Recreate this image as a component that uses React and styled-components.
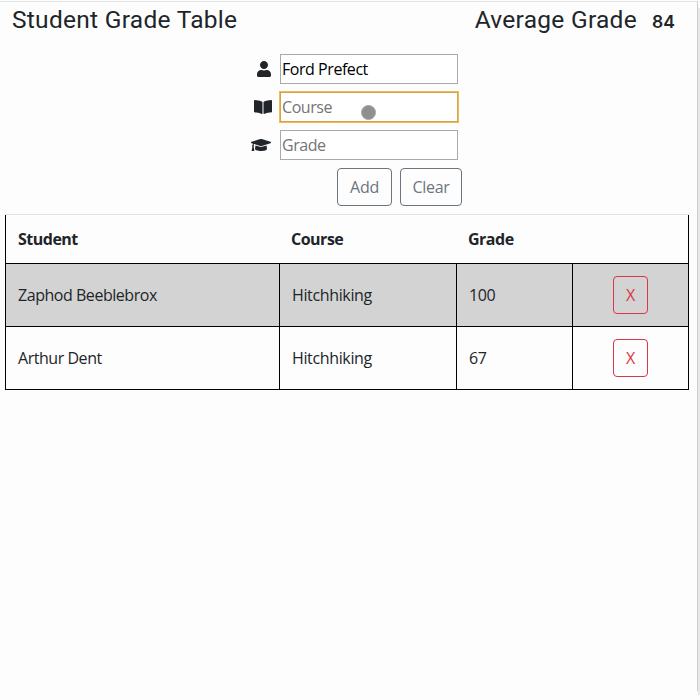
import React, { useState } from 'react';
import styled, { createGlobalStyle } from 'styled-components';
import { FaUser, FaBookOpen, FaGraduationCap } from 'react-icons/fa';

const GlobalStyle = createGlobalStyle`
  *, *::before, *::after { box-sizing: border-box; }
  body {
    margin: 0;
    overflow: hidden;
    background: #fdfdfd;
    color: #212529;
    font: 400 16px/24px "Open Sans", "Noto Sans", sans-serif;
  }
`;

const Window = styled.div`
  display: flex;
  align-items: flex-start;
  width: 700px;
  height: 700px;
`;

const Page = styled.main`
  width: 697px;
  height: 700px;
  padding: 1px 8px 0 5px;
  background: linear-gradient(#e4e6e6, #e4e6e6) 0 1px / 100% 1px no-repeat #fdfdfd;
`;

const Edge = styled.div`
  width: 1px;
  height: 690px;
  margin-top: 1px;
  background: #cecece;
`;

const Gutter = styled.div`
  width: 2px;
  height: 687px;
  margin-top: 8px;
  background: #e8e8e8;
`;

const Header = styled.header`
  display: flex;
  justify-content: space-between;
  height: 53px;
  padding: 5px 13px 0 7px;
  font-family: Roboto, sans-serif;
`;

const Title = styled.h1`
  margin: 0;
  font-size: 24.5px;
  font-weight: 400;
  line-height: 28px;
  letter-spacing: 0.28px;
  white-space: nowrap;
`;

const Average = styled.div`
  display: flex;
  gap: 15px;
`;

const Badge = styled.span`
  width: 24px;
  padding-top: 2px;
  font-family: Inter, sans-serif;
  font-size: 17.5px;
  font-weight: 600;
  line-height: 28px;
`;

const Form = styled.form`
  display: flex;
  flex-direction: column;
  gap: 8px;
  width: 215px;
  margin-left: 243px;
`;

const Field = styled.label`
  display: flex;
  align-items: center;
  gap: 8px;
  height: 30px;
`;

const IconSlot = styled.span`
  display: flex;
  justify-content: flex-end;
  flex: none;
  width: 24px;
  margin-right: ${(p) => p.$gap || 0}px;
  margin-left: ${(p) => -(p.$gap || 0)}px;
`;

const Input = styled.input`
  flex: none;
  width: 178px;
  height: 30px;
  padding: 1px;
  border: 1px solid ${(p) => (p.$active ? '#d4a24a' : '#a9a9a9')};
  border-radius: 0;
  outline: none;
  box-shadow: ${(p) => (p.$active ? '0 0 0 1px #efb95c' : 'none')};
  background: #fff;
  color: #000;
  font: inherit;
  letter-spacing: -0.45px;
  &::placeholder { color: #757575; opacity: 1; }
`;

const InputWrap = styled.span`
  position: relative;
  display: flex;
`;

const Pointer = styled.span`
  position: absolute;
  left: 81px;
  top: 13px;
  width: 15px;
  height: 15px;
  border: 1px solid #a6a6a6;
  border-radius: 50%;
  background: #8f8f8f;
`;

const Actions = styled.div`
  display: flex;
  gap: 8px;
  margin: 8px 0 8px 332px;
`;

const Button = styled.button`
  width: 55px;
  height: 38px;
  padding: 0;
  border: 1px solid #6c757d;
  border-radius: 4px;
  background: transparent;
  color: #6c757d;
  font: inherit;
  letter-spacing: -0.3px;
`;

const ClearButton = styled(Button)`
  width: 62px;
`;

const DeleteButton = styled(Button)`
  width: 35px;
  border-color: #dc3545;
  color: #dc3545;
`;

const Table = styled.div`
  width: 684px;
  border-top: 1px solid #dee2e6;
`;

const Row = styled.div`
  display: grid;
  grid-template-columns: 274px 177px 116px 116px;
  height: 63px;
  border-bottom: 1px solid #000;
  border-right: 1px solid #000;
  background: ${(p) => (p.$shaded ? '#d3d3d3' : 'transparent')};
`;

const HeadRow = styled(Row)`
  height: 49px;
  border-left: 1px solid #000;
  grid-template-columns: 273px 177px 116px 116px;
  font-weight: 700;
`;

const Cell = styled.div`
  display: flex;
  align-items: center;
  padding-left: 12px;
  border-left: 1px solid #000;
  letter-spacing: ${(p) => p.$spacing || 0}px;
`;

const HeadCell = styled(Cell)`
  border-left: 0;
  letter-spacing: -0.5px;
`;

const ActionCell = styled(Cell)`
  justify-content: center;
  padding: 0;
`;

const grades = [
  { name: 'Zaphod Beeblebrox', course: 'Hitchhiking', grade: 100 },
  { name: 'Arthur Dent', course: 'Hitchhiking', grade: 67 },
];

export default function App() {
  const [student, setStudent] = useState('Ford Prefect');
  return (
    <>
      <GlobalStyle />
      <Window>
        <Page>
          <Header>
            <Title>Student Grade Table</Title>
            <Average>
              <Title as="h2">Average Grade</Title>
              <Badge>84</Badge>
            </Average>
          </Header>
          <Form>
            <Field>
              <IconSlot><FaUser size={16} /></IconSlot>
              <Input value={student} onChange={(e) => setStudent(e.target.value)} />
            </Field>
            <Field>
              <IconSlot><FaBookOpen size={18} /></IconSlot>
              <InputWrap>
                <Input placeholder="Course" $active />
                <Pointer />
              </InputWrap>
            </Field>
            <Field>
              <IconSlot $gap={1}><FaGraduationCap size={20} /></IconSlot>
              <Input placeholder="Grade" />
            </Field>
          </Form>
          <Actions>
            <Button type="button">Add</Button>
            <ClearButton type="button">Clear</ClearButton>
          </Actions>
          <Table>
            <HeadRow>
              <HeadCell>Student</HeadCell>
              <HeadCell>Course</HeadCell>
              <HeadCell>Grade</HeadCell>
              <HeadCell />
            </HeadRow>
            {grades.map((g, i) => (
              <Row key={g.name} $shaded={i % 2 === 0}>
                <Cell $spacing={-0.46}>{g.name}</Cell>
                <Cell $spacing={-0.36}>{g.course}</Cell>
                <Cell $spacing={-0.4}>{g.grade}</Cell>
                <ActionCell>
                  <DeleteButton type="button">X</DeleteButton>
                </ActionCell>
              </Row>
            ))}
          </Table>
        </Page>
        <Edge />
        <Gutter />
      </Window>
    </>
  );
}
